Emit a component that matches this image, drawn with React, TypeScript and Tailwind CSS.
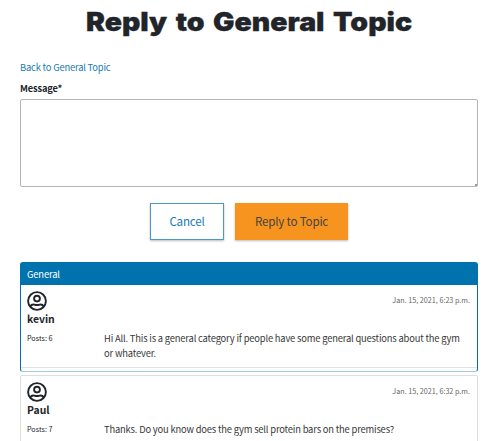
function Avatar() {
  return (
    <svg viewBox="0 0 20 20" className="block size-5" fill="none" stroke="#212529" strokeWidth="1.9">
      <circle cx="10" cy="10" r="8.9" />
      <circle cx="10" cy="7.6" r="2.9" />
      <path d="M3.2 15.4C4.4 13.6 6 13.2 7.4 13.6C9.1 14.2 10.9 14.2 12.6 13.6C14 13.2 15.6 13.6 16.8 15.4" />
    </svg>
  );
}

type PostProps = { name: string; posts: number; date: string; children: React.ReactNode };

function Post({ name, posts, date, children }: PostProps) {
  return (
    <div className="px-[6px] pt-[6px]">
      <div className="flex items-start justify-between">
        <Avatar />
        <time className="mt-[3px] mr-px text-[7.2px] leading-[12px] text-[#666]">{date}</time>
      </div>
      <h2 className="text-[10.4px] leading-[16px] font-bold">{name}</h2>
      <div className="mt-[4px] flex">
        <div className="w-[77px] shrink-0 text-[7.2px] leading-[15px]">Posts: {posts}</div>
        <p className="pr-[5px] text-[9.4px] leading-[15px] tracking-[-0.18px] text-[#383838]">{children}</p>
      </div>
    </div>
  );
}

export default function App() {
  return (
    <main className="h-[441px] overflow-hidden bg-white pr-[22px] pl-5 font-['Noto_Sans_CJK_SC',sans-serif] text-[#212529]">
      <h1 className="scale-x-[1.115] pt-[6px] text-center font-['Inter',sans-serif] text-[25.5px] leading-8 font-black whitespace-nowrap [-webkit-text-stroke:0.3px_#212529] [word-spacing:2.6px]">
        Reply to General Topic
      </h1>
      <a className="mt-[22px] block text-[9.4px] leading-[15px] tracking-[-0.19px] text-[#187bb2]">Back to General Topic</a>
      <label className="mt-[6px] block text-[9.3px] leading-[15px] font-bold tracking-[-0.15px]">Message*</label>
      <div className="relative mt-[3px] h-[88px]">
        <textarea className="block h-full w-full resize-none rounded-[2px] border border-[#b5b5b5]" />
        <span className="absolute right-px bottom-px size-[2px] bg-[#999]" />
      </div>
      <div className="mt-4 flex justify-center gap-[11px] text-[11.6px] tracking-[-0.2px]">
        <button className="h-[37px] w-[74px] border border-[#4b9ac4] text-[#187bb2] shadow-[0_1px_2px_#0004]">Cancel</button>
        <button className="h-[37px] w-[113px] bg-[#f7941f] text-[#444] shadow-[0_1px_2px_#0004]">Reply to Topic</button>
      </div>
      <section className="mt-[22px] h-[110px] rounded-[3px] border border-[#0072ad] border-b-[#9ccbe2]">
        <header className="h-[22px] bg-[#0072ad] px-[6px] text-[9.4px] leading-[22px] tracking-[-0.15px] text-white">General</header>
        <div className="h-[83px] border-b border-[#e2e2e2]">
          <Post name="kevin" posts={6} date="Jan. 15, 2021, 6:23 p.m.">
            Hi All. This is a general category if people have some general questions about the gym or whatever.
          </Post>
        </div>
      </section>
      <section className="mt-[3px] h-[100px] rounded-[2px] border border-[#ddd]">
        <Post name="Paul" posts={7} date="Jan. 15, 2021, 6:32 p.m.">
          Thanks. Do you know does the gym sell protein bars on the premises?
        </Post>
      </section>
    </main>
  );
}
